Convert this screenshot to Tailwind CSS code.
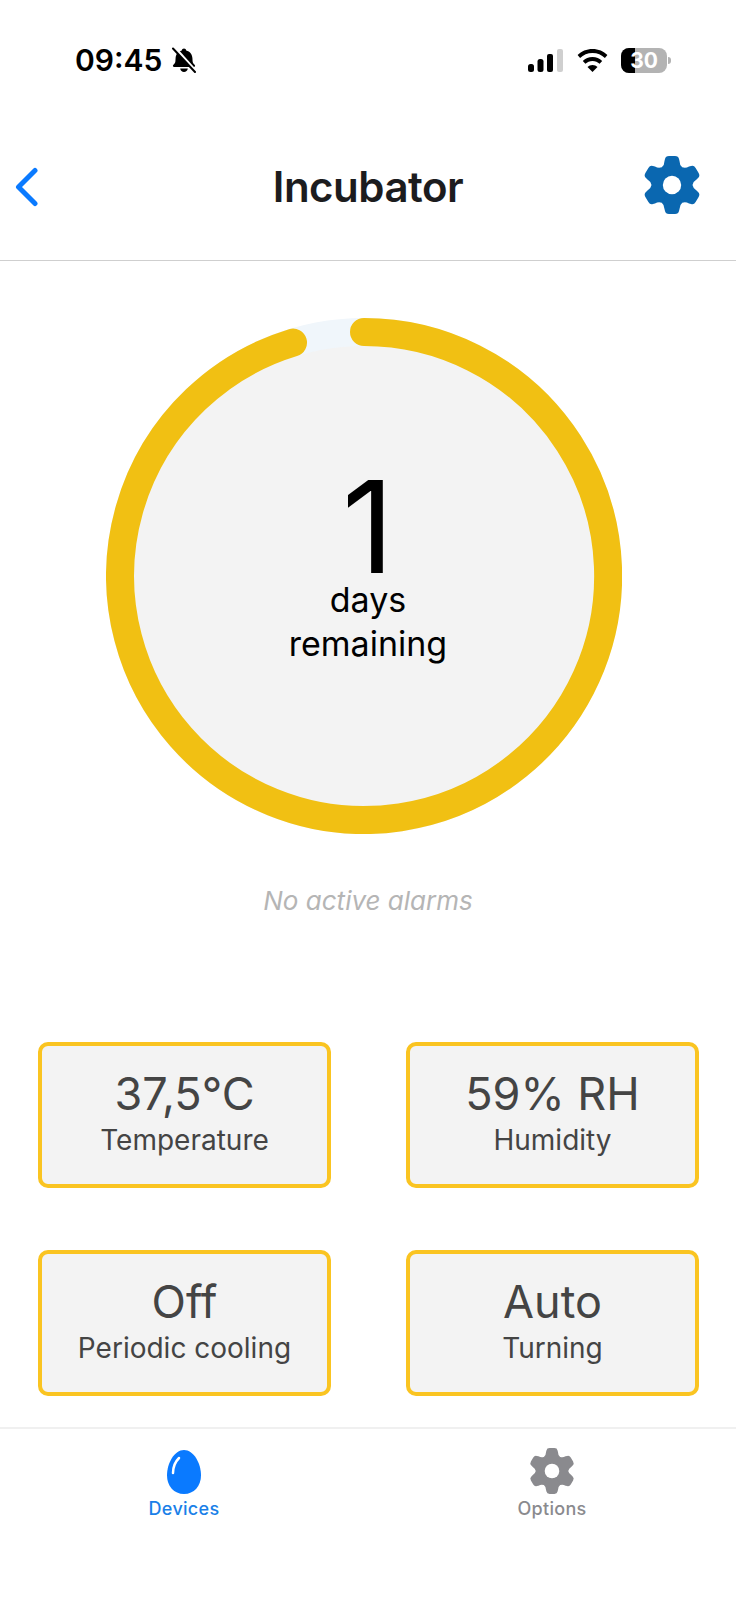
<!DOCTYPE html>
<html lang="en">
<head>
  <meta charset="UTF-8" />
  <meta name="viewport" content="width=device-width, initial-scale=1.0"/>
  <title>Incubator</title>
  <script src="https://cdn.jsdelivr.net/npm/@tailwindcss/browser@4"></script>
</head>
<body class="bg-white font-[Inter,sans-serif] w-[736px] h-[1600px] overflow-hidden">

  <!-- status bar -->
  <div class="h-[120px] flex items-center justify-between pl-[75px] pr-[65px]">
    <div class="flex items-center gap-[9px]">
      <span class="text-[30px] leading-none font-semibold text-black">09:45</span>
      <svg class="w-[26px] h-[26px]" viewBox="0 0 25 26">
        <path d="M12.500 1.500c1.200 0 2.100.8 2.200 2 3.800.9 6 3.900 6.200 7.600l.2 3.200c.1 1.500.8 2.500 2.200 3.800.7.8.2 2-1 2H2.700c-1.200 0-1.700-1.200-1-2 1.400-1.300 2.100-2.300 2.200-3.800l.2-3.200c.2-3.700 2.400-6.700 6.200-7.600.1-1.200 1-2 2.200-2zM8.700 21.500h7.600c-.2 2-1.900 3.500-3.800 3.500s-3.600-1.500-3.800-3.500z" fill="#000"/>
        <path d="M3.500 1 L24 24" stroke="#fff" stroke-width="3"/>
        <path d="M1.500 1.500 L23.500 25" stroke="#000" stroke-width="2" stroke-linecap="round"/>
      </svg>
    </div>
    <div class="flex items-center">
      <svg class="w-[35px] h-[23px]" viewBox="0 0 35 23">
        <rect x="0" y="15" width="6" height="8" rx="2.500" fill="#000"/>
        <rect x="9.500" y="10" width="6" height="13" rx="2.500" fill="#000"/>
        <rect x="19" y="5" width="6" height="18" rx="2" fill="#000"/>
        <rect x="29" y="0" width="6" height="23" rx="2" fill="#cfcfcf"/>
      </svg>
      <svg class="w-[31px] h-[23px] ml-[14px]" viewBox="0 0 31 23">
        <path d="M15.500 0C9.500 0 4.400 2.300.6 6l2.500 2.900c3.200-3.100 7.500-5 12.400-5s9.200 1.900 12.400 5L30.400 6C26.600 2.300 21.500 0 15.500 0z" fill="#000"/>
        <path d="M15.500 8c-3.800 0-7.100 1.400-9.700 3.900l2.600 2.900c1.900-1.800 4.300-2.900 7.100-2.900s5.200 1.100 7.100 2.900l2.600-2.900C22.600 9.400 19.300 8 15.500 8z" fill="#000"/>
        <path d="M15.500 16c-2 0-3.700.7-5 2l5 5 5-5c-1.300-1.300-3-2-5-2z" fill="#000"/>
      </svg>
      <div class="relative w-[46px] h-[25px] ml-[13px] rounded-[8px] bg-[#b3b3b3] overflow-hidden">
        <div class="w-[14px] h-full bg-black"></div>
        <span class="absolute inset-0 flex items-center justify-center text-[21px] leading-none font-bold text-white">30</span>
      </div>
      <div class="w-[3px] h-[7px] ml-[1px] rounded-r-full bg-[#b3b3b3]"></div>
    </div>
  </div>

  <!-- nav bar -->
  <div class="relative h-[141px] border-b border-[#cfcfcf] flex items-center justify-center pb-[7px]">
    <svg class="absolute left-[14px] top-[47px] w-[24px] h-[40px]" viewBox="0 0 24 40">
      <path d="M21 3.500 L4.500 20 L21 36.500" fill="none" stroke="#0a7aff" stroke-width="5" stroke-linecap="round" stroke-linejoin="round"/>
    </svg>
    <h1 class="text-[42px] leading-none font-semibold text-[#1c1c1e] tracking-[-0.5px]">Incubator</h1>
    <svg class="absolute left-[643px] top-[36px] w-[58px] h-[58px]" viewBox="-29 -29 58 58">
      <circle r="20" fill="#0a67b0"/>
      <path id="tooth" fill="#0a67b0" d="M0 0L-10.250 -17.750Q-7.500 -20 -7.500 -24L-7 -26Q-6.500 -29 -3 -29L3 -29Q6.500 -29 7 -26L7.500 -24Q7.500 -20 10.250 -17.750Z"/>
      <use href="#tooth" transform="rotate(60)"/>
      <use href="#tooth" transform="rotate(120)"/>
      <use href="#tooth" transform="rotate(180)"/>
      <use href="#tooth" transform="rotate(240)"/>
      <use href="#tooth" transform="rotate(300)"/>
      <circle r="9.200" fill="#fff"/>
    </svg>
  </div>

  <!-- progress ring -->
  <div class="grid w-[516px] h-[516px] ml-[106px] mt-[57px]">
    <svg class="col-start-1 row-start-1 w-[516px] h-[516px]" viewBox="0 0 516 516">
      <circle cx="258" cy="258" r="244" fill="#f3f3f3" stroke="#f0f6fb" stroke-width="28"/>
      <path d="M258 14 A244 244 0 1 1 187 24.600" fill="none" stroke="#f1c013" stroke-width="28" stroke-linecap="round"/>
    </svg>
    <div class="col-start-1 row-start-1 flex flex-col items-center pl-2 pt-[159px] text-black">
      <span class="text-[128px] leading-[100px] font-normal">1</span>
      <span class="text-[34px] leading-[44px] mt-[1px]">days</span>
      <span class="text-[34px] leading-[44px]">remaining</span>
    </div>
  </div>

  <p class="mt-[49px] text-center text-[26px] leading-[36px] italic text-[#b5b5b5]">No active alarms</p>

  <!-- readings -->
  <div class="grid grid-cols-2 gap-x-[75px] gap-y-[62px] ml-[38px] mr-[37px] mt-[123px]">
    <div class="h-[146px] rounded-[10px] border-4 border-[#fac421] bg-[#f3f3f3] flex flex-col items-center justify-center pb-[6px] text-[#444444]">
      <span class="text-[45px] leading-[56px]">37,5°C</span>
      <span class="text-[28px] leading-[36px]">Temperature</span>
    </div>
    <div class="h-[146px] rounded-[10px] border-4 border-[#fac421] bg-[#f3f3f3] flex flex-col items-center justify-center pb-[6px] text-[#444444]">
      <span class="text-[45px] leading-[56px]">59% RH</span>
      <span class="text-[28px] leading-[36px]">Humidity</span>
    </div>
    <div class="h-[146px] rounded-[10px] border-4 border-[#fac421] bg-[#f3f3f3] flex flex-col items-center justify-center pb-[6px] text-[#444444]">
      <span class="text-[45px] leading-[56px]">Off</span>
      <span class="text-[28px] leading-[36px]">Periodic cooling</span>
    </div>
    <div class="h-[146px] rounded-[10px] border-4 border-[#fac421] bg-[#f3f3f3] flex flex-col items-center justify-center pb-[6px] text-[#444444]">
      <span class="text-[45px] leading-[56px]">Auto</span>
      <span class="text-[28px] leading-[36px]">Turning</span>
    </div>
  </div>

  <!-- tab bar -->
  <div class="mt-[31px] border-t-2 border-[#f0f0f0] grid grid-cols-2 pt-[21px]">
    <div class="flex flex-col items-center">
      <svg class="w-[34px] h-[44px]" viewBox="0 0 34 44">
        <path d="M17 0C26.500 0 34 13 34 25.500 34 36 27 44 17 44 7 44 0 36 0 25.500 0 13 7.500 0 17 0z" fill="#0a7aff"/>
        <path d="M6 23C6 17 8 12 12 8" fill="none" stroke="#fff" stroke-width="2.500" stroke-linecap="round"/>
      </svg>
      <span class="text-[18px] leading-[24px] font-medium tracking-[0.3px] text-[#1a7fe8] mt-[3px]">Devices</span>
    </div>
    <div class="flex flex-col items-center">
      <svg class="w-[46px] h-[46px] -mt-[2px]" viewBox="-29 -29 58 58">
        <circle r="20" fill="#8a8a8e"/>
        <path id="tab-tooth" fill="#8a8a8e" d="M0 0L-10.250 -17.750Q-7.500 -20 -7.500 -24L-7 -26Q-6.500 -29 -3 -29L3 -29Q6.500 -29 7 -26L7.500 -24Q7.500 -20 10.250 -17.750Z"/>
        <use href="#tab-tooth" transform="rotate(60)"/>
        <use href="#tab-tooth" transform="rotate(120)"/>
        <use href="#tab-tooth" transform="rotate(180)"/>
        <use href="#tab-tooth" transform="rotate(240)"/>
        <use href="#tab-tooth" transform="rotate(300)"/>
        <circle r="9.200" fill="#fff"/>
      </svg>
      <span class="text-[18px] leading-[24px] font-medium tracking-[0.3px] text-[#8a8a8e] mt-[3px]">Options</span>
    </div>
  </div>

</body>
</html>
